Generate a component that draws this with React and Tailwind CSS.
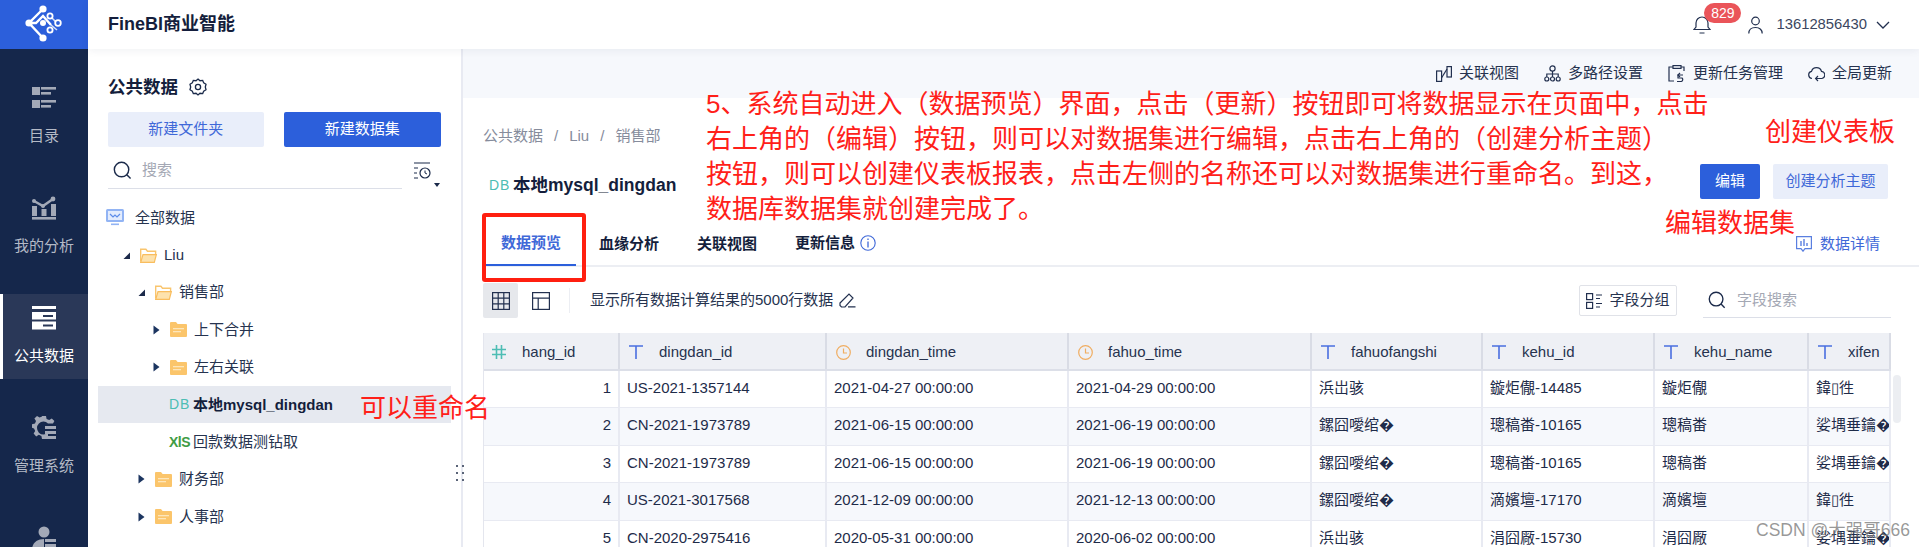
import React from 'react';

const FONT = 'font-["Liberation_Sans","Noto_Sans_CJK_SC",sans-serif]';

const S = ({ w = 20, h = 20, vb = '0 0 20 20', c = '', children }) => (
  <svg width={w} height={h} viewBox={vb} fill="none" className={`shrink-0 ${c}`}>{children}</svg>
);

const Logo = () => (
  <S w={46} h={44} vb="0 0 46 44">
    <g stroke="#fff" strokeWidth="2.4">
      <path d="M18 6 L4 20 L18 35" />
      <path d="M4 20 L11 20 L18 13 L26 22" />
    </g>
    <g stroke="#fff" strokeWidth="1.6">
      <path d="M26 22 L32 27 M25 13 L32 20" opacity="0.8" />
    </g>
    <g fill="#fff">
      <circle cx="18" cy="6" r="3.6" /><circle cx="4" cy="20" r="3.6" /><circle cx="18" cy="35" r="3.6" />
      <circle cx="18" cy="20" r="3" />
    </g>
    <g stroke="#fff" strokeWidth="1.8" fill="#2c5fdb">
      <circle cx="25" cy="13" r="2.6" /><circle cx="33" cy="20" r="2.8" /><circle cx="25" cy="27" r="2.6" />
    </g>
  </S>
);

const NavIcons = {
  catalog: (
    <S w={24} h={24} vb="0 0 24 24">
      <g fill="#a3a9b7">
        <rect x="0" y="1" width="8" height="8" /><rect x="0" y="14" width="8" height="8" />
        <rect x="9" y="1" width="15" height="2.6" /><rect x="9" y="6" width="10" height="2.6" />
        <rect x="9" y="14" width="15" height="2.6" /><rect x="9" y="19" width="10" height="2.6" />
      </g>
    </S>
  ),
  analysis: (
    <S w={24} h={24} vb="0 0 24 24">
      <g fill="#a3a9b7">
        <rect x="0" y="10" width="5" height="10" /><rect x="9.5" y="13" width="5" height="7" /><rect x="19" y="8" width="5" height="12" />
        <rect x="0" y="21" width="24" height="2.6" />
      </g>
      <path d="M2 5 L11 10 L21 3" stroke="#a3a9b7" strokeWidth="2.4" />
      <circle cx="2" cy="5" r="2" fill="#a3a9b7" /><circle cx="11" cy="10" r="2" fill="#a3a9b7" /><circle cx="21" cy="3" r="2.4" fill="#a3a9b7" />
    </S>
  ),
  data: (
    <S w={24} h={24} vb="0 0 24 24">
      <rect x="0" y="0" width="24" height="3" fill="#fff" />
      <rect x="0" y="6" width="24" height="7.5" fill="#fff" />
      <rect x="0" y="15.5" width="24" height="8" fill="#fff" />
      <rect x="11" y="9" width="10" height="2" fill="#2a3858" />
      <rect x="11" y="18.5" width="10" height="2" fill="#2a3858" />
    </S>
  ),
  admin: (
    <S w={24} h={24} vb="0 0 24 24">
      <path d="M10 0h4l.6 3 2.6 1 2.6-1.6 2.6 2.6-1.4 2.4H16a6.5 6.5 0 1 0 0 9.4v3.4l-1.4.6L14 23h-4l-.6-3-2.6-1.2-2.6 1.6-2.6-2.8 1.6-2.6L2 12.4l-2-.6v-3.6l3-.6 1-2.6-1.6-2.4L5 0l2.6 1.6L10 .6z" fill="#a3a9b7" />
      <rect x="13" y="10" width="11" height="3" fill="#a3a9b7" />
      <rect x="13" y="15" width="11" height="3" fill="#a3a9b7" />
      <rect x="13" y="20" width="11" height="3" fill="#a3a9b7" />
    </S>
  ),
  user: (
    <S w={24} h={24} vb="0 0 24 24">
      <circle cx="12" cy="6" r="5.5" fill="#a3a9b7" />
      <path d="M0 24c0-7 5-11 12-11v11z" fill="#a3a9b7" />
      <rect x="13" y="13" width="11" height="3" fill="#a3a9b7" />
      <rect x="13" y="18" width="11" height="3" fill="#a3a9b7" />
    </S>
  ),
};

const NavItem = ({ icon, label, active }) => (
  <div className={`flex h-[85px] shrink-0 flex-col items-center pt-[12px] ${active ? 'border-l-[3px] border-white bg-[#2a3858] pr-[3px] text-white' : 'text-[#b4bac6]'}`}>
    {NavIcons[icon]}
    {label && <span className="mt-[16px] text-[15px] leading-[20px]">{label}</span>}
  </div>
);

const Arrow = ({ open }) => open ? (
  <S w={7} h={7} vb="0 0 7 7"><path d="M7 0.5V7H0.5z" fill="#1c2a4a" /></S>
) : (
  <S w={7} h={10} vb="0 0 7 10"><path d="M0.5 0.5L6.5 5L0.5 9.5z" fill="#1c3560" /></S>
);

const FolderOpen = () => (
  <S w={17} h={15} vb="0 0 17 15">
    <path d="M.7 13.6V1.2h5.2l1.6 2h8.1v3" stroke="#f9c56e" strokeWidth="1.4" />
    <path d="M.7 14.3h13.6L16.3 6.7H3z" fill="#fde2ad" stroke="#f9bd5e" strokeWidth="1.2" />
  </S>
);
const FolderClosed = () => (
  <S w={17} h={15} vb="0 0 17 15">
    <path d="M0 1a1 1 0 0 1 1-1h5l1.6 2H16a1 1 0 0 1 1 1v11a1 1 0 0 1-1 1H1a1 1 0 0 1-1-1z" fill="#fbc56b" />
    <rect x="3" y="6" width="11" height="1.3" fill="#fde6bb" />
    <rect x="3" y="9" width="8" height="1.3" fill="#fde6bb" />
  </S>
);
const Monitor = () => (
  <S w={18} h={17} vb="0 0 18 17">
    <rect x="0" y="0" width="18" height="13" rx="1.5" fill="#92b4f4" />
    <rect x="2" y="2" width="14" height="9" fill="#e3ecfd" />
    <path d="M4 5l3 3 2-2 2 2 3-3" stroke="#5d8dea" strokeWidth="1.2" />
    <rect x="5" y="14.5" width="8" height="1.6" fill="#92b4f4" />
  </S>
);

const rows = [
  { pl: 'pl-[8px]', icon: <Monitor />, text: '全部数据', gap: 'ml-[11px]' },
  { pl: 'pl-[25px]', arrow: 'open', icon: <FolderOpen />, text: 'Liu' },
  { pl: 'pl-[40px]', arrow: 'open', icon: <FolderOpen />, text: '销售部' },
  { pl: 'pl-[55px]', arrow: 'closed', icon: <FolderClosed />, text: '上下合并' },
  { pl: 'pl-[55px]', arrow: 'closed', icon: <FolderClosed />, text: '左右关联' },
  { pl: 'pl-[71px]', db: 'DB', text: '本地mysql_dingdan', active: true },
  { pl: 'pl-[71px]', db: 'XLS', text: '回款数据测钻取' },
  { pl: 'pl-[40px]', arrow: 'closed', icon: <FolderClosed />, text: '财务部' },
  { pl: 'pl-[40px]', arrow: 'closed', icon: <FolderClosed />, text: '人事部' },
];

const TreeRow = ({ r }) => (
  <div className={`mx-[10px] flex h-[37.4px] items-center ${r.pl} ${r.active ? 'bg-[#e6e9f0] font-bold text-[#141e3c]' : 'text-[#26334f]'}`}>
    {r.arrow && <span className="flex w-[17px] shrink-0 items-center"><Arrow open={r.arrow === 'open'} /></span>}
    {r.icon}
    {r.db === 'DB' && <span className="w-[24px] text-[14px] font-normal tracking-[1px] text-[#4dbdb4]">DB</span>}
    {r.db === 'XLS' && <span className="w-[24px] text-[14px] font-bold leading-none tracking-[-0.5px] text-[#3f9c45]">XlS</span>}
    <span className={`text-[15px] leading-[20px] ${r.gap || (r.db ? '' : 'ml-[7px]')}`}>{r.text}</span>
  </div>
);

const Search = ({ size = 20 }) => (
  <S w={size} h={size} vb="0 0 20 20">
    <circle cx="9" cy="9" r="7.6" stroke="#1b2a4a" strokeWidth="1.5" />
    <path d="M14.5 14.5L18.5 18.5" stroke="#1b2a4a" strokeWidth="1.5" />
  </S>
);

const Panel = () => (
  <div className="relative flex w-[375px] shrink-0 flex-col border-r-2 border-[#e8eaf2] bg-white pt-[26px]">
    <div className="flex h-[24px] items-center px-[20px]">
      <span className="text-[17.5px] font-bold leading-[24px] text-[#141e3c]">公共数据</span>
      <S w={18} h={18} vb="0 0 18 18" c="ml-[11px]">
        <path d="M9 1l2 1.7 2.7-.3 1 2.5 2.3 1.3-.7 2.8.7 2.8-2.3 1.3-1 2.5-2.7-.3L9 17l-2-1.7-2.7.3-1-2.5L1 11.8l.7-2.8L1 6.2l2.3-1.3 1-2.5 2.7.3z" stroke="#1b2a4a" strokeWidth="1.3" />
        <circle cx="9" cy="9" r="2.6" stroke="#1b2a4a" strokeWidth="1.3" />
      </S>
    </div>
    <div className="mt-[13px] flex gap-[20px] px-[20px]">
      <button className="h-[35px] w-[156px] rounded-[2px] bg-[#e9eefa] text-[15px] text-[#3f68d8]">新建文件夹</button>
      <button className="h-[35px] w-[158px] rounded-[2px] bg-[#2c5fdb] text-[15px] text-white">新建数据集</button>
    </div>
    <div className="flex h-[42px] items-center">
      <div className="ml-[20px] flex h-[42px] w-[294px] items-center border-b border-[#dcdfe8] pl-[5px] pt-[6px]">
        <Search size={19} />
        <span className="ml-[10px] text-[15px] text-[#a4a8b4]">搜索</span>
      </div>
      <S w={28} h={26} vb="0 0 28 26" c="ml-[11px] mt-[14px]">
        <path d="M1 1h16M1 6h4M1 11h3M1 16h4" stroke="#1b2a4a" strokeWidth="1.2" />
        <circle cx="12" cy="11" r="5" stroke="#1b2a4a" strokeWidth="1.2" />
        <path d="M12 8.5V11l2 1" stroke="#1b2a4a" strokeWidth="1" />
        <path d="M21 21h6l-3 4z" fill="#1b2a4a" />
      </S>
    </div>
    <div className="mt-[10px] flex flex-col">
      {rows.map((r) => <TreeRow key={r.text} r={r} />)}
    </div>
    <div className="absolute left-[368px] top-[416px] grid grid-cols-2 gap-x-[6px] gap-y-[5px]">
      {[0, 1, 2, 3, 4, 5].map((i) => <span key={i} className="h-[2px] w-[2px] bg-[#5a6478]" />)}
    </div>
  </div>
);

const stroke = { stroke: '#22304f', strokeWidth: 1.2 };

const SubItem = ({ icon, text }) => (
  <div className="flex items-center gap-[7px]">
    {icon}
    <span className="text-[15px] text-[#26334f]">{text}</span>
  </div>
);

const Col = ({ type, name, w, hash }) => (
  <div className={`flex h-[36px] shrink-0 items-center border-r-2 border-[#d9dce5] pt-[2px] ${w} ${hash ? 'pl-[8px]' : 'pl-[9px]'}`}>
    <span className="flex w-[30px] shrink-0">
      {type === 'num' && (
        <S w={14} h={14} vb="0 0 14 14"><path d="M4.5 0v14M9.5 0v14M0 4.5h14M0 9.5h14" stroke="#4dbdb4" strokeWidth="1.6" /></S>
      )}
      {type === 'text' && (
        <S w={14} h={14} vb="0 0 14 14"><path d="M0 1h14M7 1v13" stroke="#4a6fe0" strokeWidth="1.6" /></S>
      )}
      {type === 'time' && (
        <S w={15} h={15} vb="0 0 15 15">
          <circle cx="7.5" cy="7.5" r="6.8" stroke="#f0ad61" strokeWidth="1.2" />
          <path d="M7.5 3.5v4.5h3.5" stroke="#f0ad61" strokeWidth="1.2" />
        </S>
      )}
    </span>
    <span className="text-[15px] text-[#26334f]">{name}</span>
  </div>
);

const widths = ['w-[136px]', 'w-[207px]', 'w-[242px]', 'w-[243px]', 'w-[171px]', 'w-[172px]', 'w-[154px]', 'w-[82px]'];
const cols = [
  ['num', 'hang_id'], ['text', 'dingdan_id'], ['time', 'dingdan_time'], ['time', 'fahuo_time'],
  ['text', 'fahuofangshi'], ['text', 'kehu_id'], ['text', 'kehu_name'], ['text', 'xifen'],
];
const data = [
  ['1', 'US-2021-1357144', '2021-04-27 00:00:00', '2021-04-29 00:00:00', '浜岀骇', '鏇炬儬-14485', '鏇炬儬', '鍏▯徃'],
  ['2', 'CN-2021-1973789', '2021-06-15 00:00:00', '2021-06-19 00:00:00', '鏍囧噯绾�', '璁稿畨-10165', '璁稿畨', '娑堣垂鑰�'],
  ['3', 'CN-2021-1973789', '2021-06-15 00:00:00', '2021-06-19 00:00:00', '鏍囧噯绾�', '璁稿畨-10165', '璁稿畨', '娑堣垂鑰�'],
  ['4', 'US-2021-3017568', '2021-12-09 00:00:00', '2021-12-13 00:00:00', '鏍囧噯绾�', '滴嬪壇-17170', '滴嬪壇', '鍏▯徃'],
  ['5', 'CN-2020-2975416', '2020-05-31 00:00:00', '2020-06-02 00:00:00', '浜岀骇', '涓囧厰-15730', '涓囧厰', '娑堣垂鑰�'],
];

const Table = () => (
  <div className="mt-[15px] flex w-[1408px] flex-col overflow-hidden border-l border-[#e4e6ee]">
    <div className="flex border-b-2 border-[#dcdfe8] bg-[#eef0f5]">
      {cols.map(([t, n], i) => <Col key={n} type={t} name={n} w={widths[i]} hash={i === 0} />)}
    </div>
    {data.map((row, ri) => (
      <div key={ri} className={`flex h-[37.4px] shrink-0 border-b border-[#e8eaf2] ${ri % 2 ? 'bg-[#f6f8fc]' : 'bg-white'}`}>
        {row.map((v, ci) => (
          <div key={ci} className={`flex shrink-0 items-center overflow-hidden whitespace-nowrap border-r-2 border-[#e8eaf2] pb-[2px] pl-[7px] text-[15px] text-[#1e2b49] ${widths[ci]} ${ci === 0 ? 'justify-end pr-[7px]' : ''}`}>
            {v}
          </div>
        ))}
      </div>
    ))}
  </div>
);

const Main = () => (
  <div className="flex min-w-0 flex-1 flex-col bg-white">
    <div className="flex h-[49px] shrink-0 items-center justify-end gap-[25px] bg-[#f6f8fc] pr-[27px]">
      <SubItem text="关联视图" icon={
        <S w={16} h={16} vb="0 0 16 16"><rect x=".6" y="5" width="5" height="10.4" stroke="#22304f" strokeWidth="1.2" /><rect x="11" y=".6" width="4.4" height="10.4" stroke="#22304f" strokeWidth="1.2" /><path d="M5.5 12L11 3" stroke="#22304f" strokeWidth="1.2" /></S>
      } />
      <SubItem text="多路径设置" icon={
        <S w={17} h={17} vb="0 0 17 17"><circle cx="8.5" cy="3.5" r="2.6" {...stroke} /><circle cx="2.8" cy="14" r="2" {...stroke} /><circle cx="8.5" cy="14" r="2" {...stroke} /><circle cx="14.2" cy="14" r="2" {...stroke} /><path d="M8.5 6v6M2.8 12V9h11.4v3" {...stroke} /></S>
      } />
      <SubItem text="更新任务管理" icon={
        <S w={18} h={17} vb="0 0 18 17"><path d="M5 2H1v14h5M13 2h3v4" {...stroke} /><rect x="5" y=".6" width="8" height="2.8" {...stroke} /><path d="M15 10h-5v3h4a2 2 0 0 1-1 3.5H9" {...stroke} /><path d="M12 8l-2 2 2 2" {...stroke} /></S>
      } />
      <SubItem text="全局更新" icon={
        <S w={17} h={16} vb="0 0 17 16"><path d="M4 12.5A3.6 3.6 0 0 1 3.5 5.4 5.2 5.2 0 0 1 13.5 5.4 3.6 3.6 0 0 1 14 12.5H8" {...stroke} /><path d="M10 10l-2.4 2.5L10 15" {...stroke} /></S>
      } />
    </div>

    <div className="pl-[20px]">
      <div className="mt-[28px] flex h-[20px] items-center gap-[11px] text-[15px] text-[#868c9c]">
        <span>公共数据</span><span>/</span><span>Liu</span><span>/</span><span>销售部</span>
      </div>

      <div className="mt-[18px] flex h-[35px] items-center pr-[31px]">
        <div className="flex items-center pl-[6px] pt-[7px]">
          <span className="w-[24px] text-[14px] tracking-[1px] text-[#4dbdb4]">DB</span>
          <span className="text-[17.5px] font-bold leading-[24px] text-[#141e3c]">本地mysql_dingdan</span>
        </div>
        <button className="ml-auto h-[35px] w-[60px] rounded-[2px] bg-[#2c5fdb] text-[15px] text-white">编辑</button>
        <button className="ml-[13px] h-[35px] w-[115px] rounded-[2px] bg-[#e9eefa] text-[15px] text-[#3f68d8]">创建分析主题</button>
      </div>

      <div className="mt-[21px] flex h-[47px] items-stretch border-b-2 border-[#eceef3] pl-[3px] pr-[19px]">
        <div className="mb-[-1px] flex items-center border-b-[2px] border-[#2c5fdb] px-[15px] pt-[3px] text-[15px] font-bold text-[#3f68d8]">数据预览</div>
        {['血缘分析', '关联视图'].map((t) => (
          <div key={t} className="ml-[8px] flex items-center px-[15px] pt-[3px] text-[15px] font-bold text-[#141e3c]">{t}</div>
        ))}
        <div className="ml-[8px] flex items-center pl-[15px] pt-[1px] text-[15px] font-bold text-[#141e3c]">
          更新信息
          <S w={16} h={16} vb="0 0 16 16" c="ml-[5px]">
            <circle cx="8" cy="8" r="7.2" stroke="#3f68d8" strokeWidth="1.1" />
            <path d="M8 6.5V12.5M8 3.5V5" stroke="#3f68d8" strokeWidth="1.3" />
          </S>
        </div>
        <div className="ml-auto mt-[13px] flex items-center gap-[8px] self-start pr-[20px] text-[15px] text-[#3f68d8]">
          <S w={16} h={16} vb="0 0 16 16"><path d="M.6.6h14.8v12H9l-2 2.6-2-2.6H.6z" stroke="#5a7fe0" strokeWidth="1.2" /><path d="M5 5v5M8 3v7M11 7v3" stroke="#5a7fe0" strokeWidth="1.4" /></S>
          数据详情
        </div>
      </div>

      <div className="mt-[16px] flex h-[35px] items-center pr-[28px]">
        <div className="flex h-[35px] w-[35px] items-center justify-center rounded-[2px] bg-[#e6e8ec]">
          <S w={18} h={18} vb="0 0 18 18"><rect x=".6" y=".6" width="16.8" height="16.8" stroke="#22304f" strokeWidth="1.2" /><path d="M.6 6.2h16.8M.6 11.8h16.8M6.2.6v16.8M11.8.6v16.8" stroke="#22304f" strokeWidth="1.2" /></S>
        </div>
        <S w={18} h={18} vb="0 0 18 18" c="ml-[14px]"><rect x=".6" y=".6" width="16.8" height="16.8" stroke="#22304f" strokeWidth="1.2" /><path d="M.6 6.2h16.8M6.2 6.2v11.2" stroke="#22304f" strokeWidth="1.2" /></S>
        <span className="ml-[19px] h-[25px] w-px bg-[#eceef3]" />
        <span className="ml-[20px] text-[15px] text-[#26334f]">显示所有数据计算结果的5000行数据</span>
        <S w={17} h={17} vb="0 0 17 17" c="ml-[6px]"><path d="M1 11L10 2l4 4-8 9H2.5L1 13.5z M9 14.8h7.5" stroke="#22304f" strokeWidth="1.2" /></S>
        <div className="ml-auto flex h-[31px] w-[98px] items-center justify-center gap-[7px] rounded-[2px] border border-[#e0e2e8] text-[15px] text-[#26334f]">
          <S w={16} h={16} vb="0 0 16 16"><rect x=".6" y=".6" width="6" height="6" {...stroke} /><rect x=".6" y="9.4" width="6" height="6" {...stroke} /><path d="M10 2h6M10 5.5h4M10 10.5h6M10 14h4" {...stroke} /></S>
          字段分组
        </div>
        <div className="ml-[26px] flex h-[35px] w-[188px] items-center border-b border-[#dcdfe8] pl-[5px]">
          <Search size={18} />
          <span className="ml-[11px] text-[15px] text-[#a4a8b4]">字段搜索</span>
        </div>
      </div>

      <Table />
    </div>
  </div>
);

const Header = () => (
  <div className="relative z-10 flex h-[49px] shrink-0 items-center bg-white pl-[20px] pr-[29px] shadow-[0_2px_8px_rgba(20,30,60,0.06)]">
    <span className="text-[18px] font-bold text-[#141e3c]">FineBI商业智能</span>
    <div className="ml-auto flex items-center">
      <div className="relative mr-[37px]">
        <S w={18} h={19} vb="0 0 18 19">
          <path d="M1 14.5h16l-2-2.5V8A6 6 0 0 0 3 8v4z M6.5 18h5" stroke="#22304f" strokeWidth="1.2" />
        </S>
        <span className="absolute left-[11px] top-[-12px] flex h-[20px] w-[37px] items-center justify-center rounded-full bg-[#ea5459] text-[14px] text-white">829</span>
      </div>
      <S w={15} h={18} vb="0 0 15 18"><circle cx="7.5" cy="5" r="3.8" stroke="#22304f" strokeWidth="1.2" /><path d="M.8 17.5c0-4 3-6 6.7-6s6.7 2 6.7 6" stroke="#22304f" strokeWidth="1.2" /></S>
      <span className="ml-[13px] text-[14.8px] text-[#3b4660]">13612856430</span>
      <S w={14} h={8} vb="0 0 14 8" c="ml-[9px]"><path d="M1 1l6 6 6-6" stroke="#22304f" strokeWidth="1.3" /></S>
    </div>
  </div>
);

const Red = ({ c, children }) => (
  <div className={`absolute whitespace-pre text-[26px] leading-[35px] text-[#ff2019] ${c}`}>{children}</div>
);

export default function App() {
  return (
    <div className={`relative flex h-[547px] w-full overflow-hidden bg-white ${FONT}`}>
      <div className="flex w-[88px] shrink-0 flex-col bg-[#15274b]">
        <div className="flex h-[49px] shrink-0 items-center justify-center bg-[#2c5fdb] pl-[8px]"><Logo /></div>
        <div className="flex flex-col gap-[25px] pt-[25px]">
          <NavItem icon="catalog" label="目录" />
          <NavItem icon="analysis" label="我的分析" />
          <NavItem icon="data" label="公共数据" active />
          <NavItem icon="admin" label="管理系统" />
          <NavItem icon="user" />
        </div>
      </div>
      <div className="flex min-w-0 flex-1 flex-col">
        <Header />
        <div className="flex min-h-0 flex-1">
          <Panel />
          <Main />
        </div>
      </div>

      <Red c="left-[706px] top-[87px]">{'5、系统自动进入（数据预览）界面，点击（更新）按钮即可将数据显示在页面中，点击\n右上角的（编辑）按钮，则可以对数据集进行编辑，点击右上角的（创建分析主题）\n按钮，则可以创建仪表板报表，点击左侧的名称还可以对数据集进行重命名。到这，\n数据库数据集就创建完成了。'}</Red>
      <Red c="left-[1765px] top-[115px]">创建仪表板</Red>
      <Red c="left-[1665px] top-[206px]">编辑数据集</Red>
      <Red c="left-[360px] top-[391px]">可以重命名</Red>
      <div className="absolute left-[482px] top-[213px] h-[69px] w-[104px] rounded-[3px] border-[4px] border-[#ff1f10]" />
      <div className="absolute left-[1893px] top-[375px] h-[48px] w-[8px] rounded-[4px] bg-[#eceef2]" />
      <div className="absolute left-[1756px] top-[517px] text-[17.5px] text-[#6b6b6b]/70">CSDN @大强哥666</div>
    </div>
  );
}
